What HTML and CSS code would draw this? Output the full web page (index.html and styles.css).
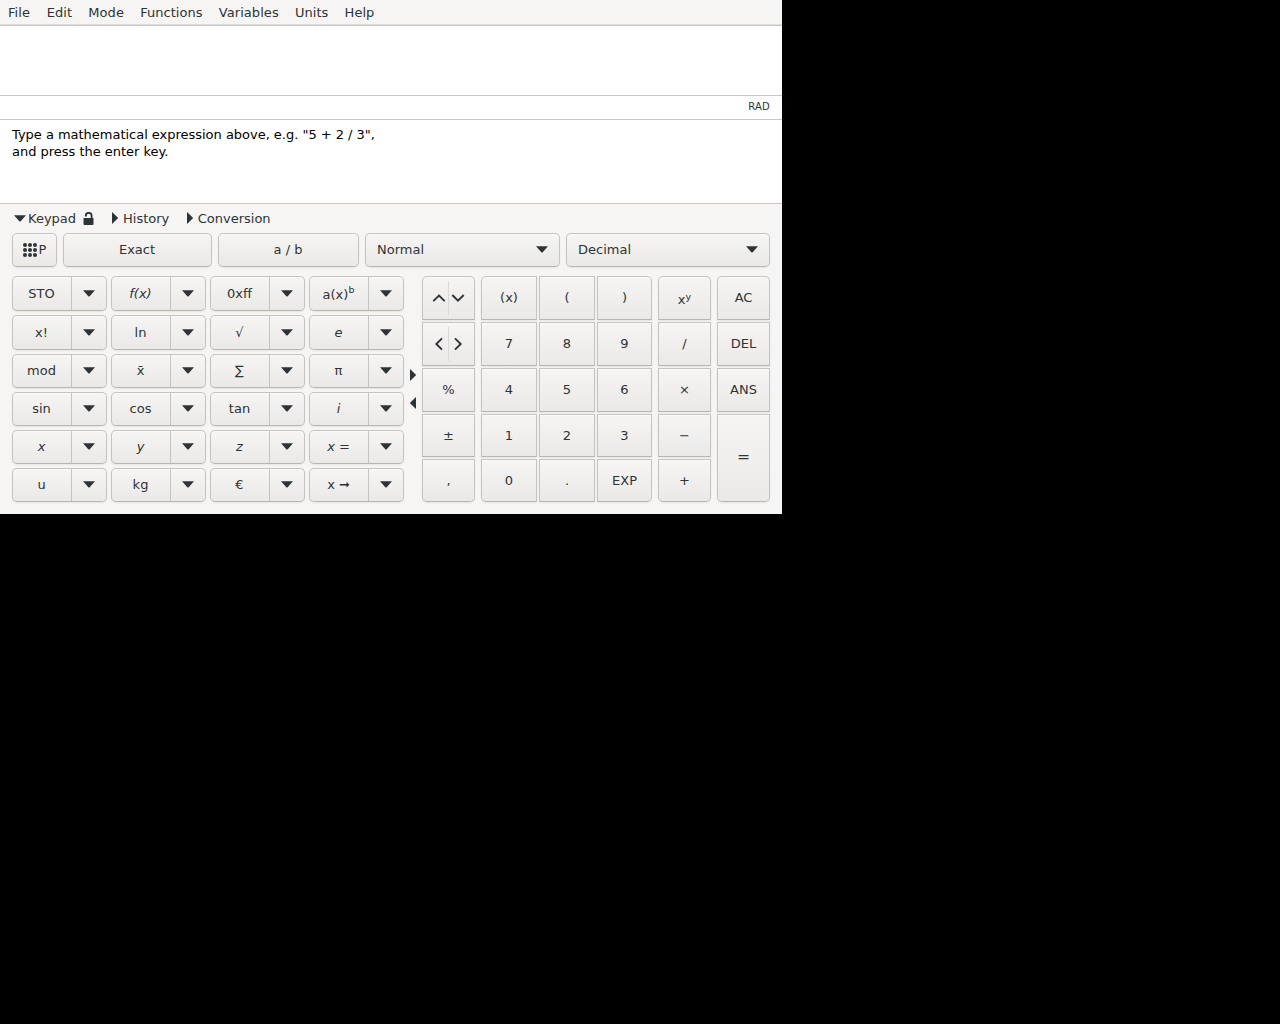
FILE: index.html
```html
<!DOCTYPE html>
<html lang="en">
<head>
<meta charset="utf-8">
<title>Calculator</title>
<link rel="stylesheet" href="styles.css">
</head>
<body>
<svg class="defs" width="0" height="0">
  <symbol id="down" viewBox="0 0 12 7"><path d="M0 .2h12L6.7 6.2q-.7.7-1.4 0z"/></symbol>
  <symbol id="right" viewBox="0 0 6 12"><path d="M0 0v12l5.7-5.4q.5-.6 0-1.2z"/></symbol>
  <symbol id="left" viewBox="0 0 6 12"><path d="M6 0v12L.3 6.6q-.5-.6 0-1.2z"/></symbol>
</svg>
<main class="window">
  <nav class="menubar"><span>File</span><span>Edit</span><span>Mode</span><span>Functions</span><span>Variables</span><span>Units</span><span>Help</span></nav>
  <section class="entry"></section>
  <section class="status">RAD</section>
  <section class="result">Type a mathematical expression above, e.g. "5 + 2 / 3",<br>and press the enter key.</section>
  <div class="tabs">
    <span class="tab keypad"><svg class="down"><use href="#down"/></svg>Keypad
      <svg class="lock" viewBox="0 0 11 13"><path d="M.5 6h10v6q0 1-1 1h-8q-1 0-1-1z"/><path d="M2.8 4.6V3.7a2.9 2.9 0 0 1 5.8 0V7" fill="none" stroke="#2e3436" stroke-width="1.8"/></svg></span>
    <span class="tab history"><svg class="right"><use href="#right"/></svg>History</span>
    <span class="tab"><svg class="right"><use href="#right"/></svg>Conversion</span>
  </div>
  <div class="toolbar">
    <div class="btn prog"><svg class="dots" viewBox="0 0 14 14"><circle cx="2" cy="2" r="2"/><circle cx="7" cy="2" r="2"/><circle cx="12" cy="2" r="2"/><circle cx="2" cy="7" r="2"/><circle cx="7" cy="7" r="2"/><circle cx="12" cy="7" r="2"/><circle cx="2" cy="12" r="2"/><circle cx="7" cy="12" r="2"/><circle cx="12" cy="12" r="2"/></svg>P</div>
    <div class="btn label">Exact</div>
    <div class="btn label">a / b</div>
    <div class="btn combo">Normal<svg class="down"><use href="#down"/></svg></div>
    <div class="btn combo">Decimal<svg class="down"><use href="#down"/></svg></div>
  </div>
  <div class="pads">
    <div class="functions">
      <div class="btn split"><span>STO</span><svg class="down"><use href="#down"/></svg></div>
      <div class="btn split"><span><i>f(x)</i></span><svg class="down"><use href="#down"/></svg></div>
      <div class="btn split"><span>0xff</span><svg class="down"><use href="#down"/></svg></div>
      <div class="btn split"><span class="raised">a(x)<sup>b</sup></span><svg class="down"><use href="#down"/></svg></div>
      <div class="btn split"><span>x!</span><svg class="down"><use href="#down"/></svg></div>
      <div class="btn split"><span>ln</span><svg class="down"><use href="#down"/></svg></div>
      <div class="btn split"><span>√</span><svg class="down"><use href="#down"/></svg></div>
      <div class="btn split"><span><i>e</i></span><svg class="down"><use href="#down"/></svg></div>
      <div class="btn split"><span>mod</span><svg class="down"><use href="#down"/></svg></div>
      <div class="btn split"><span>x̄</span><svg class="down"><use href="#down"/></svg></div>
      <div class="btn split"><span>∑</span><svg class="down"><use href="#down"/></svg></div>
      <div class="btn split"><span>π</span><svg class="down"><use href="#down"/></svg></div>
      <div class="btn split"><span>sin</span><svg class="down"><use href="#down"/></svg></div>
      <div class="btn split"><span>cos</span><svg class="down"><use href="#down"/></svg></div>
      <div class="btn split"><span>tan</span><svg class="down"><use href="#down"/></svg></div>
      <div class="btn split"><span><i>i</i></span><svg class="down"><use href="#down"/></svg></div>
      <div class="btn split"><span><i>x</i></span><svg class="down"><use href="#down"/></svg></div>
      <div class="btn split"><span><i>y</i></span><svg class="down"><use href="#down"/></svg></div>
      <div class="btn split"><span><i>z</i></span><svg class="down"><use href="#down"/></svg></div>
      <div class="btn split"><span><i>x</i>&nbsp;=</span><svg class="down"><use href="#down"/></svg></div>
      <div class="btn split"><span>u</span><svg class="down"><use href="#down"/></svg></div>
      <div class="btn split"><span>kg</span><svg class="down"><use href="#down"/></svg></div>
      <div class="btn split"><span>€</span><svg class="down"><use href="#down"/></svg></div>
      <div class="btn split"><span>x ➞</span><svg class="down"><use href="#down"/></svg></div>
    </div>
    <div class="handles"><svg><use href="#right"/></svg><svg><use href="#left"/></svg></div>
    <div class="keys narrow">
      <div class="btn pair"><svg viewBox="0 0 12 12"><path d="M.3 9.2 6 3.5l5.7 5.7"/></svg><svg viewBox="0 0 12 12"><path d="M.3 3 6 8.7 11.7 3"/></svg></div>
      <div class="btn pair"><svg viewBox="0 0 12 12"><path d="M9 .3 3.3 6 9 11.7"/></svg><svg viewBox="0 0 12 12"><path d="M3 .3 8.7 6 3 11.7"/></svg></div>
      <div class="btn">%</div><div class="btn">±</div><div class="btn">,</div>
    </div>
    <div class="keys digits">
      <div class="btn first">(x)</div><div class="btn">(</div><div class="btn third">)</div>
      <div class="btn">7</div><div class="btn">8</div><div class="btn">9</div>
      <div class="btn">4</div><div class="btn">5</div><div class="btn">6</div>
      <div class="btn">1</div><div class="btn">2</div><div class="btn">3</div>
      <div class="btn bottom-left">0</div><div class="btn">.</div><div class="btn">EXP</div>
    </div>
    <div class="keys narrow">
      <div class="btn power"><span>x<sup>y</sup></span></div><div class="btn">/</div><div class="btn">×</div><div class="btn">−</div><div class="btn">+</div>
    </div>
    <div class="keys narrow">
      <div class="btn">AC</div><div class="btn">DEL</div><div class="btn">ANS</div><div class="btn equals">=</div>
    </div>
  </div>
</main>
</body>
</html>
```
FILE: styles.css
```css
* { box-sizing: border-box; }
body { margin: 0; background: #000; font: 13px/17px "DejaVu Sans", sans-serif; color: #2e3436; }
svg { display: block; fill: #2e3436; flex: none; }
.defs { display: none; }
.window { width: 782px; height: 514px; background: #f6f5f4; overflow: hidden; }
.menubar { display: flex; height: 26px; padding: 4px 0 0 8px; gap: 16.2px; letter-spacing: .05px; border-bottom: 1px solid #c5c7c5; box-shadow: inset 0 -1px #dfdedb; }
.menubar span:first-child { margin-right: .6px; }
.entry { height: 70px; background: #fff; border-bottom: 1px solid #c4c8c6; }
.status { height: 24px; padding: 2px 12px 0 0; background: #fff; border-bottom: 1px solid #c4c8c6; text-align: right; font-size: 10px; letter-spacing: .2px; }
.result { height: 84px; padding: 6px 12px; background: #fff; border-bottom: 1px solid #c4c8c6; color: #000; letter-spacing: -.02px; }
.tabs { display: flex; height: 29px; padding: 0 14px; align-items: center; }
.tab { display: flex; align-items: center; }
.down { width: 12px; height: 7px; }
.right { width: 6px; height: 12px; margin-bottom: 1px; }
.keypad .down { margin: 0 2px 1px 0; }
.lock { width: 11px; height: 13px; margin-left: 7px; }
.history { margin: 0 17.4px 0 18px; }
.tab .right { margin-right: 5px; }
.toolbar { display: grid; grid-template-columns: 45px 149px 141px 195px 204px; gap: 6px; height: 34px; margin: 0 12px; }
.btn { display: flex; align-items: center; justify-content: center; padding-bottom: 1px; border: 1px solid #c6c4c1; border-bottom-color: #b9b6b2; border-radius: 5px; background: linear-gradient(#f6f5f4, #ebe9e7); box-shadow: inset 0 1px #fbfafa, 0 1px 2px #00000012; white-space: pre; }
.label { padding-right: 1px; }
.dots { width: 14px; height: 14px; margin-right: 2px; }
.combo { justify-content: space-between; padding: 0 11px 1px; }
.pads { display: flex; height: 226px; margin: 9px 12px 0; }
.functions { display: grid; grid-template: 35px 35px repeat(4, 34px) / repeat(4, 95px); gap: 4px; }
.split { justify-content: flex-start; padding: 0; }
.split > span { display: flex; align-items: center; justify-content: center; width: 59px; height: 100%; padding: 0 1px 1px 0; border-right: 1px solid #c6c4c1; }
.split .down { margin: 0 0 1px 11px; }
sup { font-size: 9.5px; line-height: 0; vertical-align: 5px; }
.split > .raised { padding-top: 1px; padding-bottom: 0; }
.raised sup { margin-bottom: 8px; }
.handles { width: 18px; display: flex; flex-direction: column; align-items: center; justify-content: center; gap: 16px; }
.handles svg { width: 6px; height: 12px; }
.keys { display: grid; grid-template-rows: 44px 44px 44px 43px 43px; gap: 2px; margin-right: 6px; }
.narrow { width: 53px; }
.digits { grid-template-columns: 56px 56px 55px; }
.keys:last-child { margin-right: 0; }
.keys .btn { border-radius: 0; }
.keys .btn.first { border-top-left-radius: 5px; }
.keys .btn.third { border-top-right-radius: 5px; }
.keys .btn.bottom-left { border-bottom-left-radius: 5px; }
.narrow .btn:first-child { border-radius: 5px 5px 0 0; }
.narrow .btn:last-child { border-radius: 0 0 5px 5px; }
.digits .btn:last-child { border-bottom-right-radius: 5px; }
.power { padding: 3px 0 0; }
.power sup { vertical-align: 4.5px; }
.keys .equals { grid-row: 4 / 6; font-size: 15.6px; }
.pair { padding: 4px 0; }
.pair svg { box-sizing: content-box; width: 12px; height: 12px; padding: 11px 3px; fill: none; stroke: #2e3436; stroke-width: 1.9; overflow: visible; }
.pair svg + svg { border-left: 1px solid #dcdad7; }
```
